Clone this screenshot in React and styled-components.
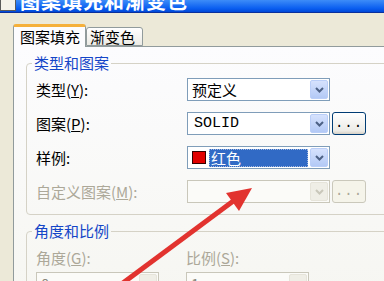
import React from 'react';
import styled, { createGlobalStyle } from 'styled-components';

const GlobalStyle = createGlobalStyle`
  html, body {
    margin: 0;
    padding: 0;
  }
  body {
    width: 384px;
    height: 281px;
    overflow: hidden;
    background: #ECE9D8;
    font-family: "Noto Sans CJK SC", "DejaVu Sans", sans-serif;
  }
`;

const Window = styled.div`
  position: relative;
  width: 384px;
  height: 281px;
  overflow: hidden;
  display: flex;
  flex-direction: column;
  background: #ECE9D8;
`;

const TitleBar = styled.div`
  flex: none;
  height: 12px;
  display: flex;
  align-items: flex-end;
  gap: 4px;
  overflow: hidden;
  background: linear-gradient(#3d8cf8, #0a5ef0 70%, #0048d8);
  border-bottom: 1px solid #0a2f9c;
`;

const TitleIcon = styled.div`
  width: 14px;
  height: 14px;
  margin-bottom: 1px;
  flex: none;
  border: 1px solid #5a5a5a;
  background: #f4f2ea;
`;

const TitleText = styled.div`
  font-size: 20px;
  line-height: 20px;
  font-weight: bold;
  letter-spacing: 1px;
  color: #fff;
  white-space: nowrap;
  margin-bottom: 1px;
`;

const Body = styled.div`
  flex: 1;
  display: flex;
  flex-direction: column;
  padding: 11px 0 0 13px;
`;

const Tabs = styled.div`
  display: flex;
  align-items: flex-end;
  height: 22px;
  flex: none;
  position: relative;
  z-index: 1;
`;

const Tab = styled.div`
  box-sizing: border-box;
  height: ${p => (p.$active ? 23 : 19)}px;
  width: ${p => p.$w}px;
  margin-bottom: ${p => (p.$active ? -1 : 0)}px;
  border: 1px solid #919B9C;
  border-bottom: ${p => (p.$active ? 'none' : '1px solid #919B9C')};
  border-top: ${p => (p.$active ? '3px solid #F5B03A' : '1px solid #919B9C')};
  border-radius: 3px 3px 0 0;
  background: ${p => (p.$active ? '#FCFCFE' : 'linear-gradient(#fff, #ECEBE5)')};
  font-size: 15px;
  line-height: ${p => (p.$active ? 19 : 17)}px;
  padding-left: ${p => (p.$active ? 6 : 3)}px;
  color: #000;
  white-space: nowrap;
`;

const Panel = styled.div`
  flex: 1;
  width: 420px;
  box-sizing: border-box;
  border-left: 1px solid #919B9C;
  border-top: 1px solid #919B9C;
  background: linear-gradient(#FCFCFE, #F6F6F1);
  padding: 0 0 0 12px;
`;

const Group = styled.fieldset`
  margin: ${p => p.$top}px 0 0 0;
  padding: ${p => p.$pt}px 0 ${p => p.$pb}px 9px;
  border: 1px solid #D5D2C6;
  border-radius: 4px;
  min-width: 0;
`;

const Legend = styled.legend`
  padding: 0 2px;
  margin-left: -4px;
  font-size: 15px;
  line-height: 16px;
  color: #1446C8;
`;

const Rows = styled.div`
  display: grid;
  grid-template-columns: 151px auto;
  row-gap: 11px;
  align-items: center;
`;

const Label = styled.div`
  font-size: 15px;
  line-height: 18px;
  color: ${p => (p.$disabled ? '#ACA899' : '#000')};
  white-space: nowrap;
`;

const Field = styled.div`
  display: flex;
  align-items: center;
  gap: 2px;
`;

const Combo = styled.div`
  box-sizing: border-box;
  width: ${p => p.$w}px;
  height: 23px;
  display: flex;
  align-items: center;
  padding: 0 1px 0 4px;
  border: 1px solid ${p => (p.$disabled ? '#C9C7BA' : '#7F9DB9')};
  background: ${p => (p.$disabled ? '#FBFBF8' : '#fff')};
`;

const ComboValue = styled.div`
  flex: 1;
  display: flex;
  align-items: center;
  gap: 3px;
  font-size: 15px;
  line-height: 18px;
  color: ${p => (p.$disabled ? '#8a887c' : '#000')};
  font-family: ${p => (p.$mono ? '"Liberation Mono", monospace' : 'inherit')};
  padding-left: ${p => (p.$mono ? 2 : 0)}px;
`;

const DropButton = styled.div`
  width: 18px;
  height: 19px;
  flex: none;
  box-sizing: border-box;
  border-radius: 2px;
  display: flex;
  align-items: center;
  justify-content: center;
  border: 1px solid ${p => (p.$disabled ? '#E6E4DA' : '#BACEF8')};
  background: ${p => (p.$disabled ? '#EFEEE6' : 'linear-gradient(#D6E2FD, #B3C9F6)')};
`;

const MoreButton = styled.div`
  box-sizing: border-box;
  width: 34px;
  height: 23px;
  border-radius: 3px;
  border: 1px solid ${p => (p.$disabled ? '#CAC8BB' : '#003C74')};
  background: ${p => (p.$disabled ? '#F5F4EA' : 'linear-gradient(#fff, #ECEBE6 85%, #D6D0C5)')};
  color: ${p => (p.$disabled ? '#ACA899' : '#000')};
  font-family: "Liberation Mono", monospace;
  font-size: 14px;
  line-height: 20px;
  text-align: center;
  letter-spacing: 1px;
`;

const Swatch = styled.span`
  width: 12px;
  height: 11px;
  background: #E00000;
  border: 1px solid #300;
  flex: none;
`;

const Selected = styled.span`
  width: 99px;
  height: 18px;
  box-sizing: border-box;
  background: #316AC5;
  color: #fff;
  border: 1px dotted #9fb7e0;
  padding-left: 1px;
  line-height: 16px;
`;

const AngleGrid = styled.div`
  display: grid;
  grid-template-columns: 150px auto;
  row-gap: 5px;
`;

const ArrowLayer = styled.svg`
  position: absolute;
  left: 0;
  top: 0;
  pointer-events: none;
`;

const Chevron = ({ disabled }) => (
  <svg width="9" height="6" viewBox="0 0 9 6">
    <path
      d="M1 1 L4.5 4.5 L8 1"
      fill="none"
      stroke={disabled ? '#C9C7BA' : '#4D6185'}
      strokeWidth="2"
    />
  </svg>
);

const Select = ({ w, disabled, mono, children }) => (
  <Combo $w={w} $disabled={disabled}>
    <ComboValue $disabled={disabled} $mono={mono}>{children}</ComboValue>
    <DropButton $disabled={disabled}>
      <Chevron disabled={disabled} />
    </DropButton>
  </Combo>
);

export default function App() {
  return (
    <Window>
      <GlobalStyle />
      <TitleBar>
        <TitleIcon />
        <TitleText>图案填充和渐变色</TitleText>
      </TitleBar>
      <Body>
        <Tabs>
          <Tab $active $w={73}>图案填充</Tab>
          <Tab $w={57}>渐变色</Tab>
        </Tabs>
        <Panel>
          <Group $top={8} $pt={7} $pb={11}>
            <Legend>类型和图案</Legend>
            <Rows>
              <Label>类型(<u>Y</u>):</Label>
              <Field>
                <Select w={143}>预定义</Select>
              </Field>
              <Label>图案(<u>P</u>):</Label>
              <Field>
                <Select w={143} mono>SOLID</Select>
                <MoreButton>...</MoreButton>
              </Field>
              <Label>样例:</Label>
              <Field>
                <Select w={143}>
                  <Swatch />
                  <Selected>红色</Selected>
                </Select>
              </Field>
              <Label $disabled>自定义图案(<u>M</u>):</Label>
              <Field>
                <Select w={143} disabled />
                <MoreButton $disabled>...</MoreButton>
              </Field>
            </Rows>
          </Group>
          <Group $top={8} $pt={10} $pb={10}>
            <Legend>角度和比例</Legend>
            <AngleGrid>
              <Label $disabled>角度(<u>G</u>):</Label>
              <Label $disabled>比例(<u>S</u>):</Label>
              <Select w={123} disabled>0</Select>
              <Select w={123} disabled>1</Select>
            </AngleGrid>
          </Group>
        </Panel>
      </Body>
      <ArrowLayer width="384" height="281" viewBox="0 0 384 281">
        <line x1="100" y1="300" x2="236" y2="199" stroke="#E2332F" strokeWidth="5" />
        <polygon points="252,188 239,211 226,193" fill="#E2332F" />
      </ArrowLayer>
    </Window>
  );
}
